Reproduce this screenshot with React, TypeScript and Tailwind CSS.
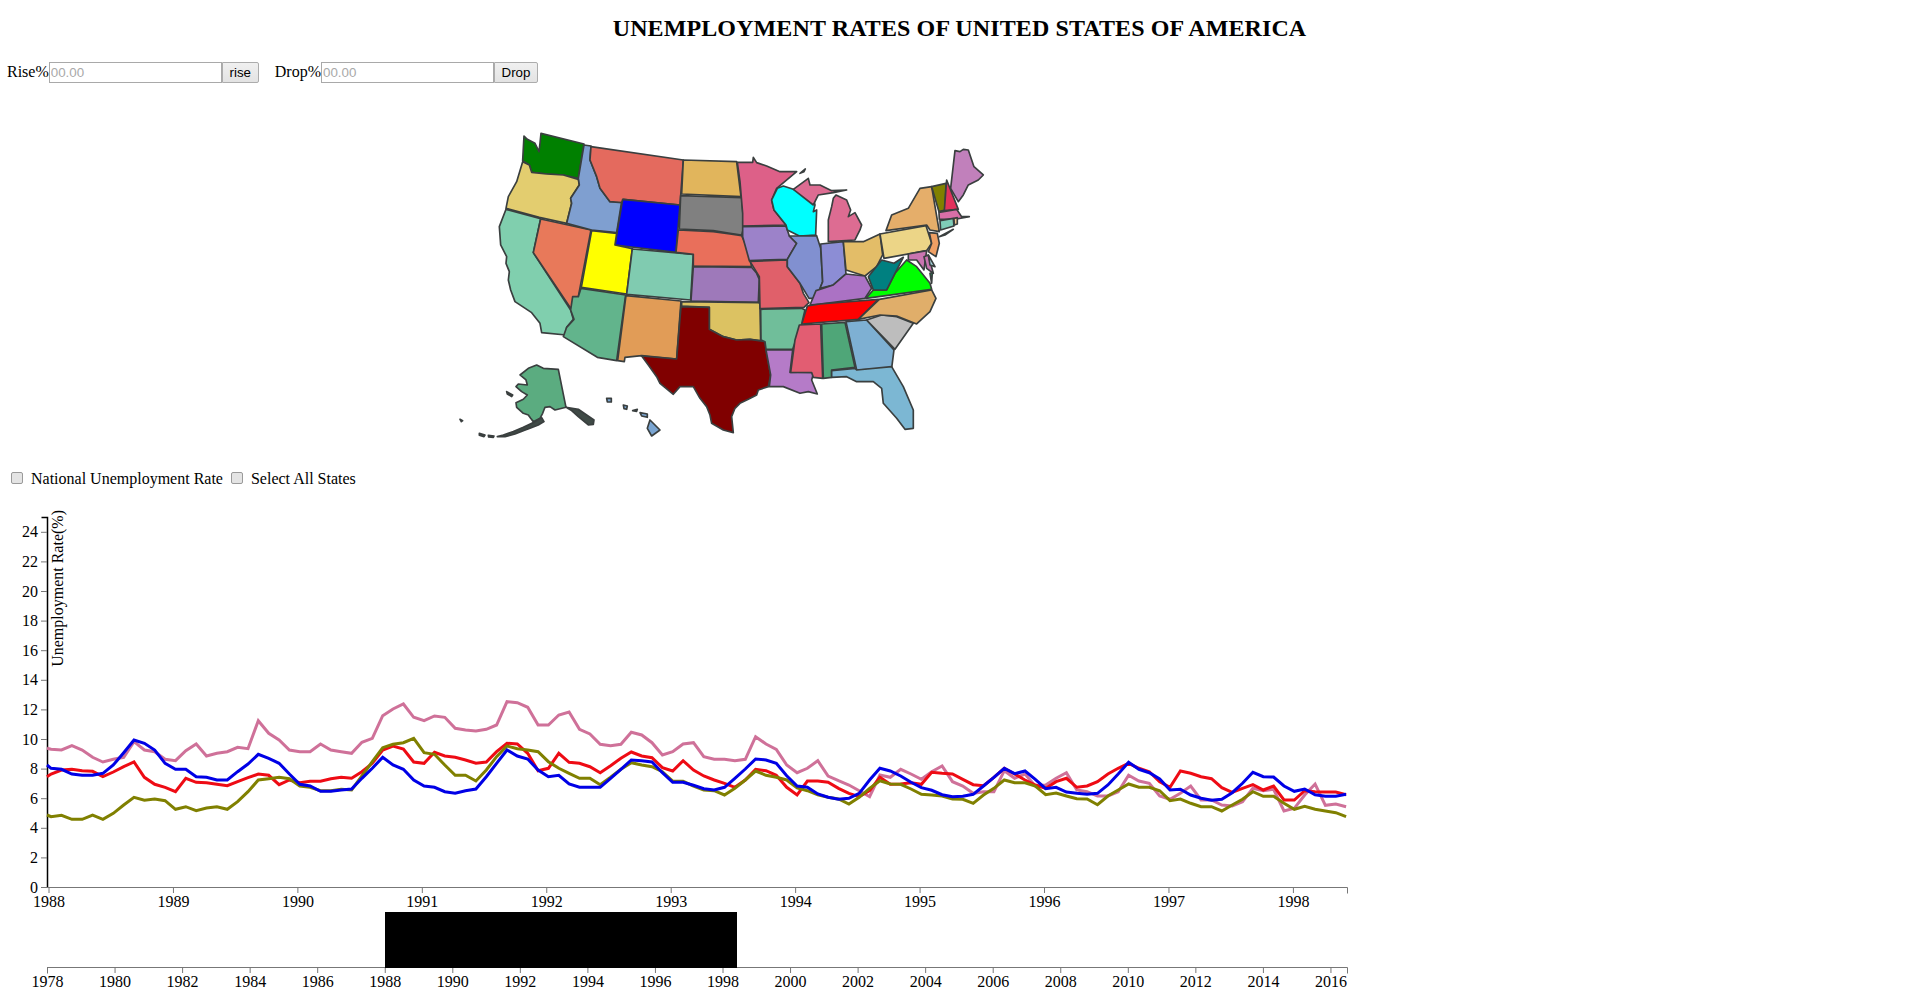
// US unemployment dashboard: title, threshold inputs, state map and line chart
const westStates: [string, string][] = [
  ['#008000', '303,40 432,72 415,175 370,165 320,162 275,157 268,135 248,122 252,48 262,58 285,70 297,95 300,70'],
  ['#e3cd6f', '248,125 268,135 275,157 320,162 370,165 415,178 418,195 392,235 395,250 380,310 298,292 198,265 205,230 230,185'],
  ['#80cfae', '198,268 302,296 280,398 392,570 400,598 380,622 378,645 305,638 300,610 275,578 225,545 212,510 205,480 208,455 198,430 200,410 182,375 178,320'],
  ['#e8795a', '302,297 453,330 415,530 392,565 280,398'],
  ['#7f9fd0', '432,75 453,78 450,120 470,170 480,205 510,245 545,245 530,338 455,330 380,310 395,250 392,235 418,195 415,175'],
  ['#e46a5e', '453,80 730,120 720,255 550,238 545,248 510,245 480,205 470,170 450,120'],
  ['#0000ff', '548,238 720,255 708,397 525,375'],
  ['#ffff00', '455,332 530,340 525,375 577,386 560,522 424,502'],
  ['#80cbb0', '577,387 760,403 752,540 560,523'],
  ['#62b48c', '423,505 557,525 530,722 472,712 370,650 380,622 402,598 392,570 398,530 415,530'],
  ['#e19c57', '558,527 723,543 710,717 605,707 555,712 553,725 533,722'],
  ['#e1b55c', '730,120 890,125 903,230 725,222'],
  ['#808080', '722,227 905,233 912,320 905,345 870,340 820,332 718,327'],
  ['#e96f5b', '715,330 820,335 870,342 905,347 920,380 935,440 760,438 760,403 708,397'],
  ['#9e79ba', '760,440 935,442 950,460 958,478 955,547 753,543'],
  ['#dcc262', '725,545 955,548 960,550 962,662 930,658 890,660 850,650 808,628 808,562 725,558'],
  ['#800000', '723,560 808,562 808,628 850,650 890,660 930,658 975,665 980,700 992,765 985,800 955,810 950,825 925,838 900,850 885,865 875,890 880,938 850,930 815,910 810,885 800,860 780,835 760,800 720,800 700,823 660,790 650,770 625,735 605,708 710,717'],
  // Alaska
  ['#5bac80', '290,735 310,745 355,748 378,862 345,870 330,860 315,862 308,880 300,895 280,905 272,895 265,885 250,880 230,862 228,848 250,838 262,825 245,815 228,800 235,792 262,795 258,780 240,765 265,745'],
  ['#3f4a46', '378,862 415,868 440,885 462,900 460,913 445,915 415,890 395,872'],
  ['#3f4a46', '305,893 312,905 295,915 270,925 250,932 225,942 195,950 172,950 190,945 220,935 250,922 285,905'],
  ['#3f4a46', '118,940 135,945 132,950 118,946'],
  ['#3f4a46', '145,946 162,948 160,952 146,951'],
  ['#3f4a46', '200,815 218,825 215,830 202,822'],
  ['#3f4a46', '60,898 68,902 64,905'],
  // Hawaii
  ['#7aa5d2', '630,900 660,930 635,948 622,925'],
  ['#7aa5d2', '600,878 622,882 622,892 605,888'],
  ['#7aa5d2', '578,872 592,868 590,874'],
  ['#7aa5d2', '550,855 562,858 560,868 552,866'],
  ['#7aa5d2', '500,835 514,835 514,846 502,846'],
];

const eastStates: [string, string][] = [
  ['#dd6088', '112,127 158,127 160,112 170,128 200,138 240,155 290,155 230,205 215,240 222,270 258,315 128,318 128,280 120,185'],
  ['#9c82c9', '128,320 258,318 268,348 290,370 262,418 148,422 128,350'],
  ['#e0606a', '150,424 262,420 262,440 300,490 310,520 327,548 312,562 180,566 178,470'],
  ['#00ffff', '232,205 250,198 280,208 340,235 345,255 340,275 350,270 347,345 298,348 262,330 258,315 222,270 215,240'],
  ['#8190d0', '300,348 350,347 362,385 368,485 350,535 327,535 300,490 262,440 262,418 290,370 268,348'],
  ['#8c8dd5', '362,372 430,365 438,462 400,495 360,505 368,485'],
  ['#dd6c92', '385,365 385,300 395,260 400,235 408,225 440,240 452,270 445,290 465,278 485,315 480,330 465,360'],
  ['#dd6c92', '280,208 325,175 330,195 360,195 395,212 440,210 400,218 355,225 340,255'],
  ['#dd6c92', '300,160 316,147 312,155'],
  ['#e3bd68', '430,365 490,365 540,342 548,405 530,440 495,468 438,450'],
  ['#ab72c4', '330,555 348,512 400,495 438,462 495,468 515,505 495,535 360,552'],
  ['#ff0000', '322,558 360,552 535,538 475,598 305,612'],
  ['#70be9a', '182,568 305,565 315,570 305,612 278,688 198,688 195,665 183,660'],
  ['#b57bc8', '198,690 278,690 270,757 342,755 335,780 352,822 325,815 300,820 250,800 208,800 212,765'],
  ['#e25d72', '298,615 362,612 368,775 340,772 335,758 272,757 285,660'],
  ['#4fa678', '365,612 435,607 465,742 395,750 395,772 370,775'],
  ['#7eb0d3', '438,605 500,600 582,690 575,745 470,750'],
  ['#7cb7d3', '395,752 465,745 470,750 575,740 610,800 640,870 640,925 615,928 590,895 550,850 545,805 520,785 470,785 440,770 395,772'],
  ['#bdbdbd', '500,600 545,585 590,590 640,610 585,688'],
  ['#e0ae6a', '475,598 538,538 695,510 708,535 690,575 650,612 590,588 540,585'],
  ['#00ff00', '498,535 520,510 560,510 585,460 620,420 650,440 690,490 695,508'],
  ['#008080', '505,470 545,420 582,430 610,412 585,460 560,510 520,510'],
  ['#ecd587', '540,342 678,317 695,370 680,392 552,415'],
  ['#e5ae6a', '558,332 575,285 625,265 660,205 695,200 718,335 690,330 680,315'],
  ['#e5ae6a', '718,350 760,328 735,345'],
  ['#efa064', '688,338 712,340 718,370 708,410 685,395 695,370'],
  ['#808000', '695,200 738,190 735,270 717,275'],
  ['#e2325c', '740,180 775,268 733,272'],
  ['#c180bb', '752,205 765,92 780,95 790,88 805,90 822,140 850,165 835,180 805,195 790,225 775,245'],
  ['#d96fa8', '717,277 770,268 785,290 808,290 770,297 718,298'],
  ['#7fcdb8', '720,302 760,295 762,318 722,330'],
  ['#f0c890', '762,295 772,293 772,312 763,315'],
  ['#c975b0', '625,402 680,392 672,450 650,420 625,420'],
  ['#c975b0', '672,410 685,405 700,460 680,445'],
  ['#a8d5e0', '685,405 705,440 690,435'],
  ['#00c060', '690,460 697,458 695,490'],
];

// y values are 3x page pixels above page y=700; x step is one month
const pinkLine = [148,150,137,150,172,186,178,172,125,150,155,178,182,152,132,168,160,155,142,146,62,100,120,150,155,155,132,150,155,160,127,115,47,27,12,52,62,48,52,85,90,93,88,75,5,8,22,75,75,45,36,88,102,133,137,133,97,105,128,165,155,132,128,170,178,178,182,178,110,132,148,195,218,205,182,228,242,255,272,290,225,232,208,222,238,215,198,245,258,280,275,275,212,235,222,258,255,235,218,270,275,288,288,275,226,243,250,288,298,280,258,300,300,315,318,305,265,272,268,333,325,285,252,316,312,320];
const redLine = [222,210,208,212,214,230,216,200,186,232,253,262,275,235,247,248,253,257,245,233,222,226,254,240,248,244,244,236,232,235,215,190,150,138,147,186,190,157,168,172,180,190,186,155,130,132,160,212,205,160,187,190,200,218,197,175,156,168,173,203,213,182,210,228,240,250,262,240,208,212,226,262,285,243,243,247,265,280,290,272,232,253,252,248,253,217,220,222,238,254,257,232,205,222,240,255,265,245,235,262,258,245,222,205,190,205,215,245,262,213,220,230,236,263,277,265,254,270,258,300,300,272,275,276,276,284];
const oliveLine = [350,346,358,358,345,358,340,315,292,301,297,302,328,320,332,324,320,328,305,275,240,236,232,236,258,262,272,272,268,270,228,185,143,133,128,115,158,163,195,226,226,243,210,170,138,146,150,155,185,205,220,235,235,254,232,208,188,195,200,215,243,244,258,270,272,285,265,240,213,226,232,240,264,272,284,292,297,312,292,265,242,252,253,267,283,285,288,297,298,310,285,265,240,248,248,258,284,279,288,296,297,314,288,270,252,262,262,272,302,297,310,320,320,333,315,298,275,289,289,310,328,319,328,333,338,350];
const blueLine = [205,208,222,226,226,220,195,158,120,130,150,190,208,208,230,232,240,240,215,192,163,175,190,222,253,258,274,274,270,267,235,205,172,195,208,240,258,262,275,280,272,267,230,190,150,168,177,210,230,226,252,262,262,262,235,208,180,182,186,218,247,247,256,266,270,262,235,207,177,180,190,227,258,262,282,292,298,295,280,240,205,213,228,247,263,271,284,290,289,283,258,232,205,221,213,238,266,262,276,280,283,280,255,222,187,208,218,237,270,268,285,295,301,298,278,250,217,230,231,258,274,267,284,289,289,283];

const toPoints = (values: number[], startY: number) => {
  const points = values.map((y, i) => `${((153.4 + 31.08 * i) / 3).toFixed(1)},${(700 + y / 3).toFixed(1)}`);
  return `47,${(700 + startY / 3).toFixed(1)} ` + points.join(' ');
};

const lines = [
  { color: '#cf7199', values: pinkLine, startY: 145 },
  { color: '#ee0b14', values: redLine, startY: 230 },
  { color: '#808000', values: oliveLine, startY: 345 },
  { color: '#0000e6', values: blueLine, startY: 195 },
];

const yTicks = [0, 2, 4, 6, 8, 10, 12, 14, 16, 18, 20, 22, 24];
const mainYears = [1988, 1989, 1990, 1991, 1992, 1993, 1994, 1995, 1996, 1997, 1998];
const brushYears = [1978, 1980, 1982, 1984, 1986, 1988, 1990, 1992, 1994, 1996, 1998, 2000, 2002, 2004, 2006, 2008, 2010, 2012, 2014, 2016];

function ThresholdInput({ label, button, buttonWidth }: { label: string; button: string; buttonWidth: string }) {
  return (
    <div className="flex items-center">
      <span className="text-base text-black">{label}</span>
      <input
        type="text"
        placeholder="00.00"
        className="h-[21px] w-[173px] border border-[#a9a9a9] bg-white pl-px text-[13.33px] font-['Liberation_Sans',sans-serif] placeholder:text-[#a9a9a9]"
      />
      <button
        type="button"
        className={`h-[21px] ${buttonWidth} border border-[#acacac] rounded-r-[2px] bg-linear-to-b from-[#f0f0f0] to-[#e3e3e3] text-[13.33px] text-black font-['Liberation_Sans',sans-serif]`}
      >
        {button}
      </button>
    </div>
  );
}

function UsMap() {
  return (
    <svg viewBox="440 120 620 330" className="block ml-[440px] mt-[36px] w-[620px] h-[330px]">
      <g transform="translate(440,120) scale(0.3333)" stroke="#3a3f3f" strokeWidth={5} strokeLinejoin="round">
        {westStates.map(([fill, points], i) => (
          <polygon key={i} fill={fill} points={points} />
        ))}
      </g>
      <g transform="translate(700,120) scale(0.3333)" stroke="#3a3f3f" strokeWidth={5} strokeLinejoin="round">
        {eastStates.map(([fill, points], i) => (
          <polygon key={i} fill={fill} points={points} />
        ))}
      </g>
    </svg>
  );
}

function Chart() {
  return (
    <svg viewBox="0 500 1400 507" className="block w-[1400px] h-[507px] mt-[11px]" fontSize={16} fill="#000">
      {/* y axis */}
      <path d="M41.5,517.5 H47.5 V887.5" fill="none" stroke="#000" strokeWidth={1.5} />
      {yTicks.map((t) => {
        const y = 887.5 - t * 14.8;
        return (
          <g key={t}>
            <line x1={41} x2={47} y1={y} y2={y} stroke="#777" />
            <text x={38} y={y + 5} textAnchor="end">{t}</text>
          </g>
        );
      })}
      <text transform="translate(63,510) rotate(-90)" textAnchor="end">Unemployment Rate(%)</text>

      {/* main x axis */}
      <path d="M47.5,887.5 H1347.5 V893.5" fill="none" stroke="#777" />
      {mainYears.map((year, i) => {
        const x = 49 + i * 124.44;
        return (
          <g key={year}>
            <line x1={x} x2={x} y1={887} y2={893} stroke="#777" />
            <text x={x} y={907} textAnchor="middle">{year}</text>
          </g>
        );
      })}

      {/* series */}
      {lines.map((line) => (
        <polyline key={line.color} points={toPoints(line.values, line.startY)} fill="none" stroke={line.color} strokeWidth={3} />
      ))}

      {/* brush */}
      <path d="M47.5,973.5 V967.5 H1347.5 V973.5" fill="none" stroke="#777" />
      {brushYears.map((year, i) => {
        const x = 47.5 + i * 67.55;
        return (
          <g key={year}>
            <line x1={x} x2={x} y1={967} y2={973} stroke="#777" />
            <text x={x} y={987} textAnchor="middle">{year}</text>
          </g>
        );
      })}
      <rect x={385} y={912} width={352} height={56} fill="#000" />
    </svg>
  );
}

export default function App() {
  return (
    <div className="h-[1007px] overflow-hidden bg-white text-black font-['Liberation_Serif',serif]">
      <h2 className="pt-[14px] pl-[12px] text-center text-2xl font-bold leading-7 tracking-[0.11px]">
        UNEMPLOYMENT RATES OF UNITED STATES OF AMERICA
      </h2>
      <div className="flex items-center gap-[16px] pl-[7px] mt-[18px]">
        <ThresholdInput label="Rise%" button="rise" buttonWidth="w-[37px]" />
        <ThresholdInput label="Drop%" button="Drop" buttonWidth="w-[44px]" />
      </div>
      <UsMap />
      <div className="flex items-center h-[20px] mt-[19px] pl-[11px] text-base">
        <input type="checkbox" className="appearance-none w-[12px] h-[12px] rounded-[2px] border border-[#9a9a9a] bg-[#e4e4e4] -mt-[3px]" />
        <span className="ml-[8px]">National Unemployment Rate</span>
        <input type="checkbox" className="appearance-none w-[12px] h-[12px] rounded-[2px] border border-[#9a9a9a] bg-[#e4e4e4] -mt-[3px] ml-[8px]" />
        <span className="ml-[8px]">Select All States</span>
      </div>
      <Chart />
    </div>
  );
}
